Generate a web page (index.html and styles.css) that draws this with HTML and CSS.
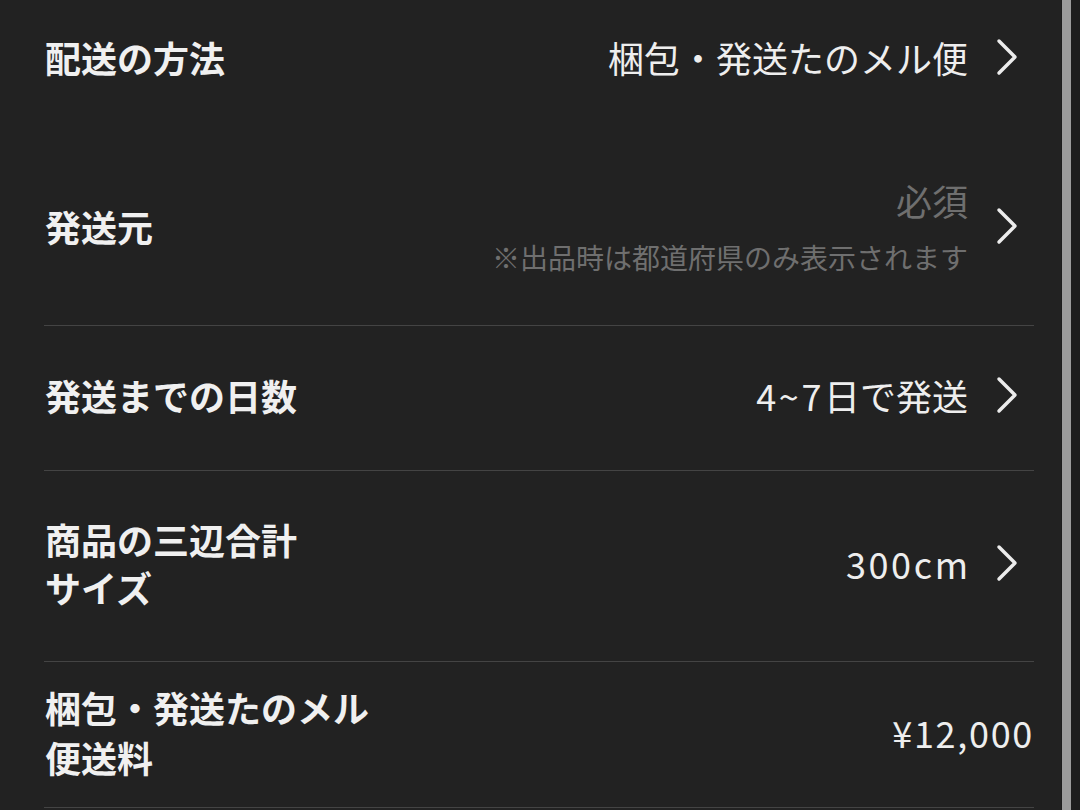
FILE: index.html
```html
<!DOCTYPE html>
<html>
<head>
    <link rel="stylesheet" href="styles.css">
</head>
<body>
    <div class="screen">
        <div class="settings">
            <div class="row row-top">
                <span class="label">配送の方法</span>
                <div class="value">
                    <span class="value-text">梱包・発送たのメル便</span>
                    <svg class="chevron" viewBox="0 0 24 38"><polyline points="4,3 20,19 4,35"/></svg>
                </div>
            </div>

            <div class="row row-origin">
                <span class="label">発送元</span>
                <div class="value">
                    <div class="value-stack">
                        <span class="placeholder">必須</span>
                        <span class="note">※出品時は都道府県のみ表示されます</span>
                    </div>
                    <svg class="chevron" viewBox="0 0 24 38"><polyline points="4,3 20,19 4,35"/></svg>
                </div>
            </div>

            <div class="row row-days">
                <span class="label">発送までの日数</span>
                <div class="value">
                    <span class="value-text"><span class="num">4~7</span>日で発送</span>
                    <svg class="chevron" viewBox="0 0 24 38"><polyline points="4,3 20,19 4,35"/></svg>
                </div>
            </div>

            <div class="row row-size">
                <span class="label">商品の三辺合計<br>サイズ</span>
                <div class="value">
                    <span class="value-text num num-end">300cm</span>
                    <svg class="chevron" viewBox="0 0 24 38"><polyline points="4,3 20,19 4,35"/></svg>
                </div>
            </div>

            <div class="row row-fee">
                <span class="label">梱包・発送たのメル<br>便送料</span>
                <div class="value value-plain">
                    <span class="value-text num price">¥12,000</span>
                </div>
            </div>
        </div>
        <div class="scrollbar">
            <div class="scroll-thumb"></div>
        </div>
    </div>
</body>
</html>
```

FILE: styles.css
```css
html, body {
    margin: 0;
    padding: 0;
    background: #222222;
}

body {
    font-family: "Noto Sans CJK JP", "Noto Sans", sans-serif;
    color: #efefef;
    overflow: hidden;
}

.screen {
    display: flex;
    width: 1080px;
    height: 810px;
}

.settings {
    flex: 1;
    display: flex;
    flex-direction: column;
    padding: 0 27px 0 44px;
}

.row {
    display: flex;
    align-items: center;
    justify-content: space-between;
    border-bottom: 1px solid #444444;
    box-sizing: border-box;
    padding-bottom: 6px;
}

.row-top {
    height: 120px;
    border-bottom: none;
}

.row-origin {
    height: 206px;
    padding-top: 13px;
}

.row-days {
    height: 145px;
}

.row-size {
    height: 191px;
}

.row-fee {
    height: 146px;
}

.label {
    font-size: 36px;
    font-weight: 700;
    line-height: 48px;
    color: #f0f0f0;
    padding-left: 1px;
}

.row-fee .label {
    line-height: 50px;
}

.value {
    display: flex;
    align-items: center;
    padding-right: 15px;
}

.value-plain {
    padding-right: 2px;
}

.value-text {
    font-size: 36px;
    font-weight: 400;
    line-height: 48px;
    color: #eeeeee;
}

.num {
    letter-spacing: 2.6px;
}

.num-end {
    margin-right: -2.6px;
}

.price {
    letter-spacing: 1.7px;
    margin-right: -2px;
}

.value-stack {
    display: flex;
    flex-direction: column;
    align-items: flex-end;
}

.placeholder {
    font-size: 36px;
    line-height: 50px;
    color: #6f6f6f;
}

.note {
    font-size: 28px;
    line-height: 40px;
    margin-top: 12px;
    color: #6f6f6f;
}

.chevron {
    width: 24px;
    height: 38px;
    margin-left: 27px;
    fill: none;
    stroke: #ececec;
    stroke-width: 3.5;
    stroke-linecap: round;
    stroke-linejoin: round;
}

.scrollbar {
    width: 18px;
    background: #1d1d1d;
    display: flex;
    padding-left: 1px;
}

.scroll-thumb {
    width: 9px;
    background: #9b9b9b;
}
```
